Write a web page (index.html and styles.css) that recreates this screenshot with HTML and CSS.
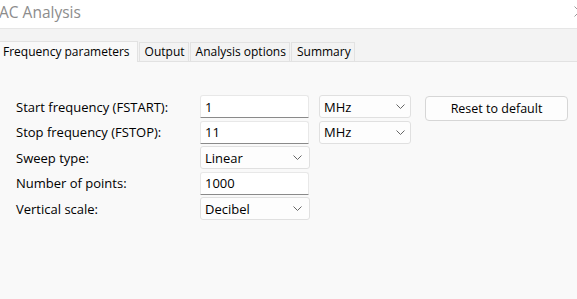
FILE: index.html
```html
<!DOCTYPE html>
<html>
<head>
	<title>AC Analysis</title>
	<meta charset="utf-8">
	<link rel="stylesheet" href="styles.css">
</head>
<body>
<div class="titlebar">
	<span class="title">AC Analysis</span>
	<svg class="close" width="11" height="11" viewBox="0 0 11 11"><path d="M0.5 0.5 L10.5 10.5 M10.5 0.5 L0.5 10.5" stroke="#9a9a9a" stroke-width="1" fill="none"/></svg>
</div>
<div class="tabstrip">
	<div class="tab active">Frequency parameters</div>
	<div class="tab">Output</div>
	<div class="tab">Analysis options</div>
	<div class="tab">Summary</div>
</div>
<div class="panel">
	<div class="form">
		<label>Start frequency (FSTART):</label>
		<input class="field" type="text" value="1">
		<div class="select unit"><span>MHz</span><svg width="9" height="5" viewBox="0 0 9 5"><path d="M0.5 0.5 L4.5 4.5 L8.5 0.5" stroke="#666" fill="none"/></svg></div>
		<button class="btn">Reset to default</button>

		<label>Stop frequency (FSTOP):</label>
		<input class="field" type="text" value="11">
		<div class="select unit"><span>MHz</span><svg width="9" height="5" viewBox="0 0 9 5"><path d="M0.5 0.5 L4.5 4.5 L8.5 0.5" stroke="#666" fill="none"/></svg></div>
		<div></div>

		<label>Sweep type:</label>
		<div class="select"><span>Linear</span><svg width="9" height="5" viewBox="0 0 9 5"><path d="M0.5 0.5 L4.5 4.5 L8.5 0.5" stroke="#666" fill="none"/></svg></div>
		<div></div><div></div>

		<label>Number of points:</label>
		<input class="field" type="text" value="1000">
		<div></div><div></div>

		<label>Vertical scale:</label>
		<div class="select"><span>Decibel</span><svg width="9" height="5" viewBox="0 0 9 5"><path d="M0.5 0.5 L4.5 4.5 L8.5 0.5" stroke="#666" fill="none"/></svg></div>
		<div></div><div></div>
	</div>
</div>
</body>
</html>
```

FILE: styles.css
```css
*{
	margin: 0;
	padding: 0;
	box-sizing: border-box;
}
html, body{
	height: 100%;
}
body{
	background: #f3f3f3;
	overflow: hidden;
	font-family: "Open Sans", "Noto Sans", sans-serif;
	color: #000;
	display: flex;
	flex-direction: column;
}
.titlebar{
	height: 29px;
	flex: none;
	background: #fff;
	border-bottom: 1px solid #e6e6e6;
	display: flex;
	align-items: center;
	justify-content: space-between;
}
.title{
	font-size: 15.5px;
	color: #8c8c8c;
	margin-left: -1px;
	margin-top: -4px;
}
.close{
	margin-right: -8px;
	margin-top: -6px;
}
.tabstrip{
	flex: none;
	display: flex;
	align-items: flex-end;
	padding-top: 12px;
	border-bottom: 1px solid #e2e2e2;
}
.tab{
	font-size: 12px;
	height: 19px;
	line-height: 18px;
	padding: 0 3px 0 5px;
	border: 1px solid #e2e2e2;
	border-bottom: none;
	margin-right: 1px;
	background: #f3f3f3;
}
.tab.active{
	height: 21px;
	line-height: 20px;
	padding: 0 7px 0 3px;
	border-left: none;
	background: #f9f9f9;
	margin-bottom: -1px;
}
.panel{
	flex: 1;
	background: #f9f9f9;
	padding: 33px 0 0 16px;
}
.form{
	display: grid;
	grid-template-columns: 184px 119px 106px 143px;
	grid-auto-rows: 23px;
	row-gap: 2.5px;
	align-items: center;
	justify-items: start;
	font-size: 13px;
}
.form label{
	white-space: nowrap;
}
.field{
	height: 23px;
	width: 109px;
	font: inherit;
	color: #000;
	background: #fff;
	border: 1px solid #e8e8e8;
	border-bottom: 1px solid #8a8a8a;
	border-radius: 3px 3px 0 0;
	padding: 0 4px;
	outline: none;
}
.select{
	height: 23px;
	width: 110px;
	background: #fdfdfd;
	border: 1px solid #e0e0e0;
	border-radius: 3px;
	display: flex;
	align-items: center;
	justify-content: space-between;
	padding: 0 7px 0 4px;
}
.select.unit{
	width: 92px;
	padding-right: 5px;
}
.btn{
	height: 25px;
	margin-top: 1px;
	margin-bottom: -3px;
	align-self: start;
	width: 143px;
	font: inherit;
	font-size: 12.5px;
	color: #000;
	background: #fdfdfd;
	border: 1px solid #d6d6d6;
	border-radius: 4px;
}
```
